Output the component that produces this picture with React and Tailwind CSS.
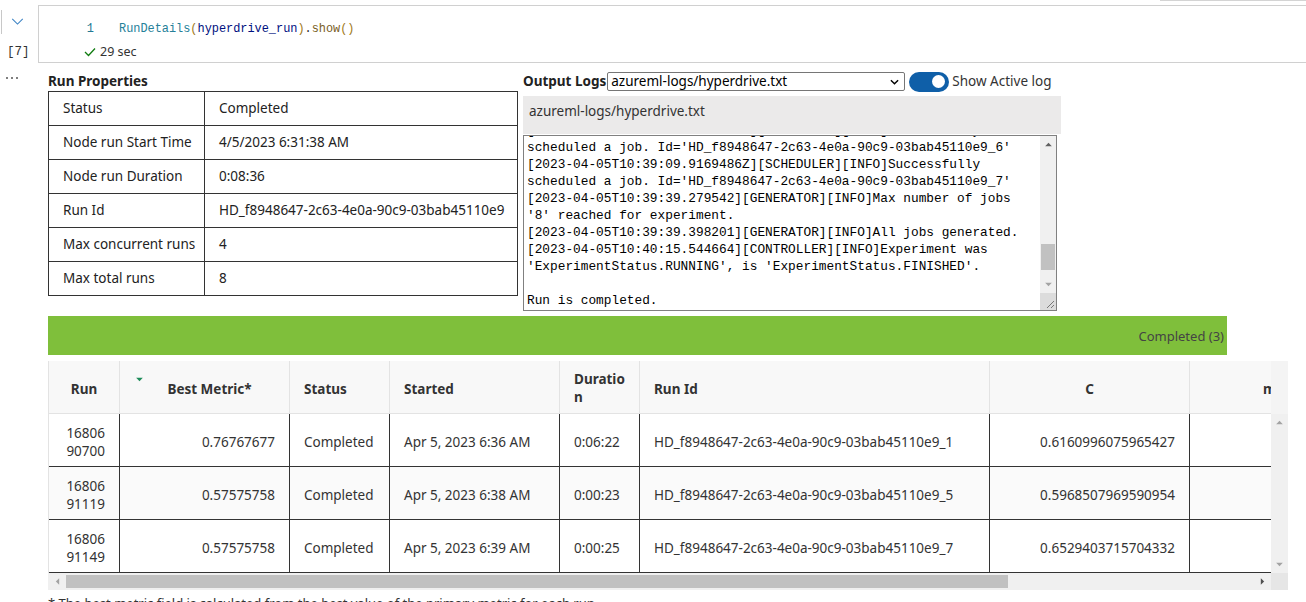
import React from 'react';

const props = [
  ['Status', 'Completed'],
  ['Node run Start Time', '4/5/2023 6:31:38 AM'],
  ['Node run Duration', '0:08:36'],
  ['Run Id', 'HD_f8948647-2c63-4e0a-90c9-03bab45110e9'],
  ['Max concurrent runs', '4'],
  ['Max total runs', '8'],
];

const logLines = [
  "[2023-04-05T10:39:09.6497912Z][SCHEDULER][INFO]Successfully",
  "scheduled a job. Id='HD_f8948647-2c63-4e0a-90c9-03bab45110e9_6'",
  "[2023-04-05T10:39:09.9169486Z][SCHEDULER][INFO]Successfully",
  "scheduled a job. Id='HD_f8948647-2c63-4e0a-90c9-03bab45110e9_7'",
  "[2023-04-05T10:39:39.279542][GENERATOR][INFO]Max number of jobs",
  "'8' reached for experiment.",
  "[2023-04-05T10:39:39.398201][GENERATOR][INFO]All jobs generated.",
  "[2023-04-05T10:40:15.544664][CONTROLLER][INFO]Experiment was",
  "'ExperimentStatus.RUNNING', is 'ExperimentStatus.FINISHED'.",
  "\u00a0",
  "Run is completed.",
];

const runs = [
  ['16806', '90700', '0.76767677', 'Apr 5, 2023 6:36 AM', '0:06:22', 'HD_f8948647-2c63-4e0a-90c9-03bab45110e9_1', '0.6160996075965427', 'bg-white'],
  ['16806', '91119', '0.57575758', 'Apr 5, 2023 6:38 AM', '0:00:23', 'HD_f8948647-2c63-4e0a-90c9-03bab45110e9_5', '0.5968507969590954', 'bg-[#fafafa]'],
  ['16806', '91149', '0.57575758', 'Apr 5, 2023 6:39 AM', '0:00:25', 'HD_f8948647-2c63-4e0a-90c9-03bab45110e9_7', '0.6529403715704332', 'bg-white'],
];

function Tri({ dir = 'up', color = '#a3a3a3' }) {
  const pts = {
    up: '0,5 4,1 8,5',
    down: '0,1 4,5 8,1',
    left: '5,0 1,4 5,8',
    right: '1,0 5,4 1,8',
  }[dir];
  const vb = dir === 'up' || dir === 'down' ? '0 0 8 6' : '0 0 6 8';
  const cls = dir === 'up' || dir === 'down' ? 'w-[7px] h-[5px]' : 'w-[5px] h-[7px]';
  return (
    <svg viewBox={vb} className={cls}>
      <polygon points={pts} fill={color} />
    </svg>
  );
}

function RunProperties() {
  return (
    <div className="w-[470px]">
      <div className="h-[19px] leading-[19px] text-[13.5px] font-bold text-[#222]">Run Properties</div>
      <div className="border border-[#333] text-[13.5px] text-[#222]">
        {props.map(([k, v], i) => (
          <div key={k} className={`flex h-[33px] items-center ${i > 0 ? 'border-t border-[#333] h-[34px]' : ''}`}>
            <div className="w-[156px] h-full flex items-center pl-[14px] border-r border-[#333]">{k}</div>
            <div className="flex-1 pl-[14px]">{v}</div>
          </div>
        ))}
      </div>
    </div>
  );
}

function OutputLogs() {
  return (
    <div className="ml-[5px] w-[538px]">
      <div className="flex items-center h-[19px]">
        <span className="text-[13.5px] font-bold text-[#222] leading-[19px]">Output Logs</span>
        <div className="ml-px w-[298px] h-[19px] border border-[#767676] rounded-[2px] flex items-center justify-between pl-[3px] pr-[5px] text-[13.5px] text-black">
          <span>azureml-logs/hyperdrive.txt</span>
          <svg viewBox="0 0 10 6" className="w-[9px] h-[6px]">
            <path d="M1 1 L5 5 L9 1" stroke="#000" strokeWidth="1.6" fill="none" />
          </svg>
        </div>
        <div className="ml-[4px] w-[40px] h-[20px] rounded-full bg-[#0f5fa8] flex items-center justify-end pr-[4px]">
          <div className="w-[13px] h-[13px] rounded-full bg-white" />
        </div>
        <span className="ml-[3px] text-[13.5px] text-[#333]">Show Active log</span>
      </div>
      <div className="mt-[5px] h-[38px] bg-[#ebeaea] pl-[6px] pt-[6px] leading-[18px] text-[13.5px] text-[#333]">
        azureml-logs/hyperdrive.txt
      </div>
      <div className="mt-px w-[534px] h-[176px] border border-[#808080] flex overflow-hidden">
        <div className="flex-1 overflow-hidden pl-[3px]">
          <div className="-mt-[14px] font-['Liberation_Mono',monospace] text-[12.8px] leading-[17px] text-black whitespace-pre">
            {logLines.map((l, i) => (
              <div key={i}>{l}</div>
            ))}
          </div>
        </div>
        <div className="w-[16px] bg-[#f0f0f0] flex flex-col items-center">
          <div className="h-[17px] flex items-center justify-center"><Tri dir="up" color="#606060" /></div>
          <div className="flex-1 w-full px-[1px] flex flex-col">
            <div className="flex-1" />
            <div className="h-[26px] bg-[#c1c1c1]" />
            <div className="h-[6px]" />
          </div>
          <div className="h-[17px] flex items-center justify-center"><Tri dir="down" color="#a3a3a3" /></div>
          <div className="h-[17px] w-full bg-[#dcdcdc] flex items-end justify-end">
            <svg viewBox="0 0 16 16" className="w-[16px] h-[16px]">
              <path d="M14 7 L7 14 M14 11 L11 14" stroke="#777" strokeWidth="1" />
            </svg>
          </div>
        </div>
      </div>
    </div>
  );
}

function RunsTable() {
  const cols = 'grid grid-cols-[71px_170px_100px_170px_80px_350px_200px_200px]';
  const hcell = 'h-[52px] flex items-center border-r border-[#e3e3e3] font-bold text-[13.5px] text-[#333]';
  const bcell = 'h-[52px] flex items-center border-r border-[#333] text-[13.5px] text-[#333] pt-[4px]';
  return (
    <div className="mt-[6px] flex w-[1240px]">
      <div className="w-[1223px] flex flex-col">
        <div className="overflow-hidden h-[212px] border-l border-[#e3e3e3]">
          <div className={`${cols} w-[1341px] bg-[#f8f8f8] border-b border-[#e3e3e3]`}>
            <div className={`${hcell} justify-center pt-[5px]`}>Run</div>
            <div className={`${hcell} relative justify-center pt-[5px]`}>
              <div className="absolute left-[16px] top-[16px]"><Tri dir="down" color="#1e8c5a" /></div>
              <span className="ml-[10px]">Best Metric*</span>
            </div>
            <div className={`${hcell} pl-[14px] pt-[5px]`}>Status</div>
            <div className={`${hcell} pl-[14px] pt-[5px]`}>Started</div>
            <div className={`${hcell} pl-[14px] pt-[2px] leading-[18px]`}>Duratio<br />n</div>
            <div className={`${hcell} pl-[14px] pt-[5px]`}>Run Id</div>
            <div className={`${hcell} justify-center pt-[5px]`}>C</div>
            <div className={`${hcell} pl-[73px] pt-[5px]`}>max_iter</div>
          </div>
          {runs.map((r) => (
            <div key={r[1]} className={`${cols} w-[1341px] border-b border-[#333] ${r[7]}`}>
              <div className={`${bcell} justify-end pr-[14px] text-right leading-[18px]`}>{r[0]}<br />{r[1]}</div>
              <div className={`${bcell} justify-end pr-[14px]`}>{r[2]}</div>
              <div className={`${bcell} pl-[14px]`}>Completed</div>
              <div className={`${bcell} pl-[14px]`}>{r[3]}</div>
              <div className={`${bcell} pl-[14px]`}>{r[4]}</div>
              <div className={`${bcell} pl-[14px]`}>{r[5]}</div>
              <div className={`${bcell} justify-end pr-[14px]`}>{r[6]}</div>
              <div className={`${bcell} justify-end pr-[14px]`}>100</div>
            </div>
          ))}
        </div>
        <div className="h-[17px] bg-[#f0f0f0] flex items-center">
          <div className="w-[18px] flex justify-center"><Tri dir="left" color="#a3a3a3" /></div>
          <div className="w-[942px] h-[13px] bg-[#c1c1c1]" />
          <div className="flex-1" />
          <div className="w-[18px] flex justify-center"><Tri dir="right" color="#505050" /></div>
        </div>
      </div>
      <div className="w-[17px] bg-[#f0f0f0] flex flex-col items-center">
        <div className="h-[53px] w-full bg-[#f4f4f4]" />
        <div className="h-[17px] flex items-center justify-center"><Tri dir="up" color="#a3a3a3" /></div>
        <div className="flex-1" />
        <div className="h-[17px] flex items-center justify-center"><Tri dir="down" color="#a3a3a3" /></div>
        <div className="h-[17px] w-full bg-[#e6e6e6]" />
      </div>
    </div>
  );
}

export default function App() {
  return (
    <div className="w-[1306px] h-[602px] overflow-hidden bg-white font-['Segoe_UI','Noto_Sans',sans-serif] relative">
      <div className="absolute left-[1160px] top-0 w-[146px] h-px bg-[#d4d4d4]" />
      <div className="flex pt-[5px]">
        <div className="w-[38px] relative">
          <div className="absolute left-[1px] top-[5px] w-px h-[24px] bg-[#c8c8c8]" />
          <svg viewBox="0 0 14 8" className="absolute left-[11px] top-[13px] w-[13px] h-[7px]">
            <path d="M1 1 L7 7 L13 1" stroke="#3b82c4" strokeWidth="1.2" fill="none" />
          </svg>
          <div className="absolute left-[7px] top-[38px] font-['Liberation_Mono',monospace] text-[12.5px] text-[#333]">[7]</div>
        </div>
        <div className="flex-1 h-[58px] border border-[#d0d0d0] border-r-0 pt-[16px]">
          <div className="flex items-center h-[16px] font-['Liberation_Mono',monospace] text-[11.9px]">
            <span className="w-[80px] text-right pr-[25px] text-[#237893]">1</span>
            <span className="text-[#267f99]">RunDetails</span>
            <span className="text-[#a07a1a]">(</span>
            <span className="text-[#001080]">hyperdrive_run</span>
            <span className="text-[#a07a1a]">)</span>
            <span className="text-[#333]">.</span>
            <span className="text-[#795e26]">show</span>
            <span className="text-[#a07a1a]">()</span>
          </div>
          <div className="flex items-center ml-[45px] mt-[5px] h-[18px] text-[12.5px] text-[#333]">
            <svg viewBox="0 0 12 10" className="w-[12px] h-[10px]">
              <path d="M1 5 L4.5 8.5 L11 1.5" stroke="#107c10" strokeWidth="1.3" fill="none" />
            </svg>
            <span className="ml-[4px]">29 sec</span>
          </div>
        </div>
      </div>
      <div className="flex pt-[9px]">
        <div className="w-[48px] relative">
          <div className="absolute left-[6px] top-[5px] flex gap-[3px]">
            <span className="w-[2px] h-[2px] rounded-full bg-[#555]" />
            <span className="w-[2px] h-[2px] rounded-full bg-[#555]" />
            <span className="w-[2px] h-[2px] rounded-full bg-[#555]" />
          </div>
        </div>
        <div className="flex-1">
          <div className="flex">
            <RunProperties />
            <OutputLogs />
          </div>
          <div className="mt-[5px] w-[1179px] h-[39px] bg-[#7fbf3b] flex items-center justify-end pr-[3px] pt-[3px] text-[13px] text-[#444]">
            Completed (3)
          </div>
          <RunsTable />
          <div className="mt-[4px] text-[13px] text-[#333] leading-[18px]">
            * The best metric field is calculated from the best value of the primary metric for each run.
          </div>
        </div>
      </div>
    </div>
  );
}
